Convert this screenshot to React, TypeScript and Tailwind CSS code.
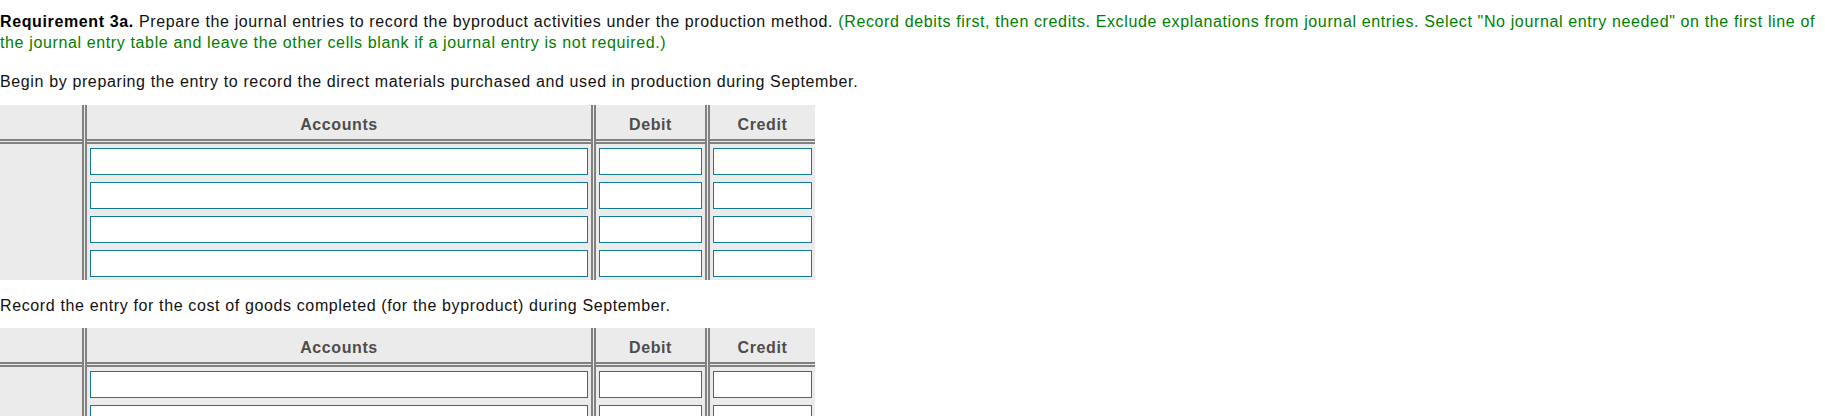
import React from 'react';

// column layout of the journal table: widths of the inner cell area
const cols = [
  { key: 'blank', label: '', width: 'w-[82px]', input: '' },
  { key: 'accounts', label: 'Accounts', width: 'w-[504px]', input: 'w-[498px]' },
  { key: 'debit', label: 'Debit', width: 'w-[109px]', input: 'w-[103px]' },
  { key: 'credit', label: 'Credit', width: 'w-[105px]', input: 'w-[99px]' },
];

function JournalTable({ rows = 4 }: { rows?: number }) {
  return (
    <div className="flex w-[815px] gap-x-[1px] bg-[#ebebeb]">
      {cols.map((col, i) => (
        <div
          key={col.key}
          className={`flex flex-col ${i > 0 ? 'border-l-2' : ''} ${i < cols.length - 1 ? 'border-r-2' : ''} border-[#808080]`}
        >
          {/* header */}
          <div
            className={`${col.width} flex h-[36px] items-center justify-center border-b-2 border-[#808080] pt-[5px] text-[16px] font-bold tracking-[0.6px] text-[#4d4d4d]`}
          >
            {col.label}
          </div>
          <div className="h-[1px]" />
          {/* body */}
          <div className={`${col.width} border-t-2 border-[#808080]`}>
            {Array.from({ length: rows }).map((_, r) => (
              <div key={r} className="flex h-[34px] items-center justify-center">
                {col.input && (
                  <input
                    type="text"
                    className={`${col.input} h-[27px] border border-[#117a9a] bg-white outline-none`}
                  />
                )}
              </div>
            ))}
          </div>
        </div>
      ))}
    </div>
  );
}

export default function App() {
  return (
    <div className="h-[416px] overflow-hidden bg-white font-['Liberation_Sans',Arial,sans-serif] text-[16px] tracking-[0.63px] text-[#111]">
      <p className="mt-[12px] leading-[20.5px]">
        <span className="font-bold text-black">Requirement 3a.</span> Prepare the journal entries to record the
        byproduct activities under the production method.{' '}
        <span className="text-[#008000]">
          (Record debits first, then credits. Exclude explanations from journal entries. Select "No journal entry
          needed" on the first line of the journal entry table and leave the other cells blank if a journal entry is
          not required.)
        </span>
      </p>

      <p className="mt-[19px] leading-[20.5px]">
        Begin by preparing the entry to record the direct materials purchased and used in production during September.
      </p>

      <div className="mt-[12.5px] tracking-normal">
        <JournalTable />
      </div>

      <p className="mt-[16px] leading-[20.5px]">
        Record the entry for the cost of goods completed (for the byproduct) during September.
      </p>

      <div className="mt-[11.5px] tracking-normal">
        <JournalTable />
      </div>
    </div>
  );
}
